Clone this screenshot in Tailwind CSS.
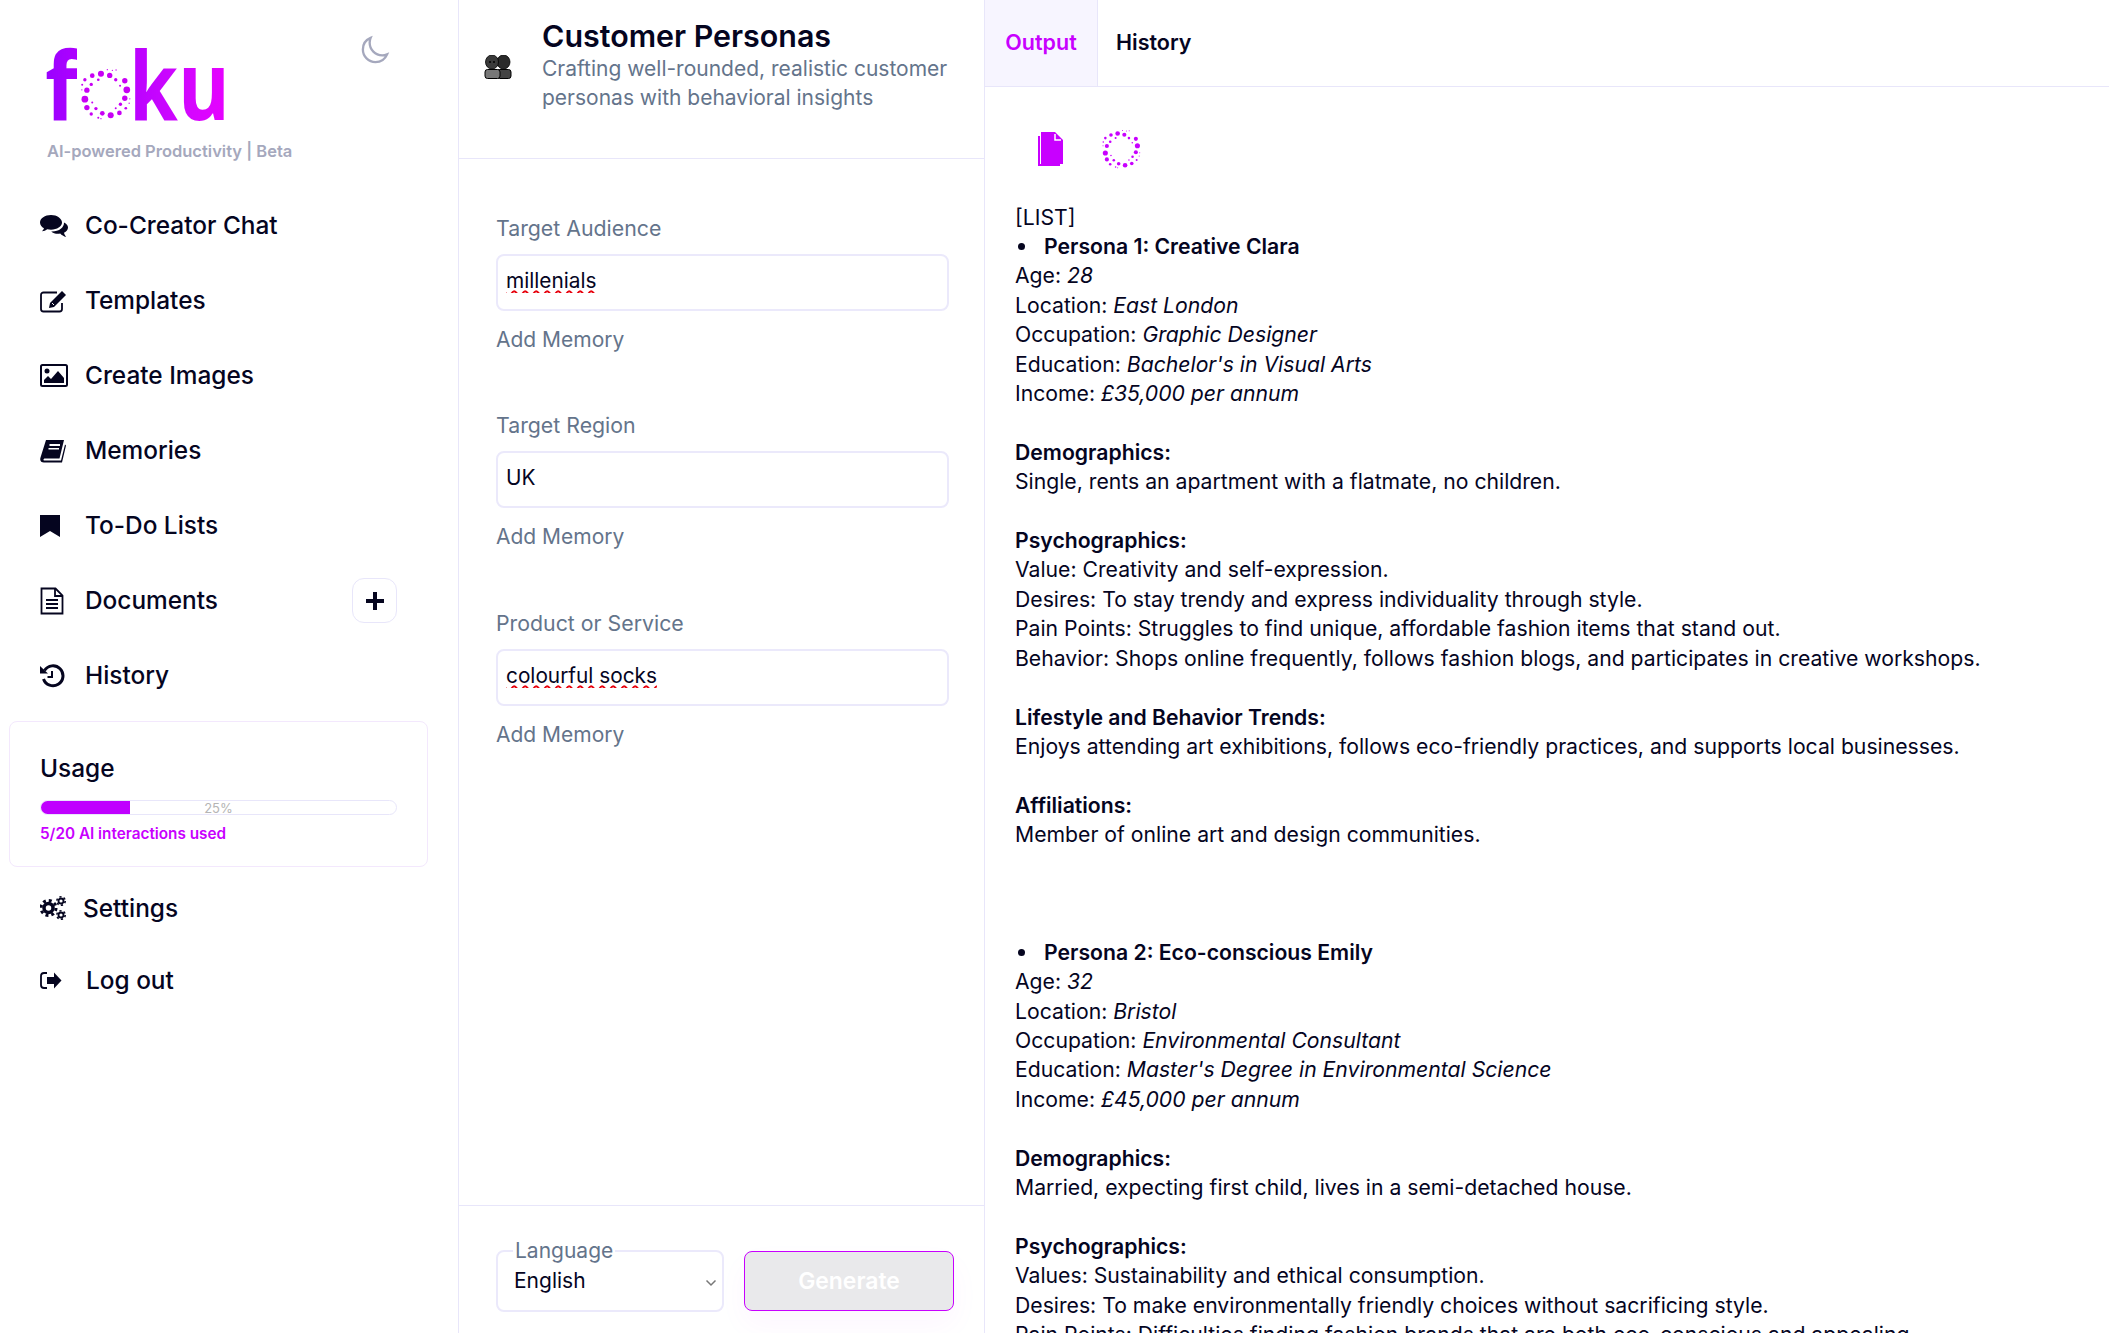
<!DOCTYPE html>
<html lang="en">
<head>
  <meta charset="UTF-8" />
  <title>Foku - Customer Personas</title>
  <script src="https://cdn.jsdelivr.net/npm/@tailwindcss/browser@4"></script>
</head>
<body class="bg-white text-[#05051f] font-['Inter',sans-serif] overflow-hidden">
  <!-- shared dot ring, used by the logo and the output toolbar -->
  <svg class="hidden">
    <symbol id="ring" viewBox="240 205 152 155">
      <circle cx="378" cy="270" r="10"/><circle cx="253" cy="298" r="10"/><circle cx="330" cy="346" r="9"/><circle cx="301" cy="222" r="9"/>
      <circle cx="327" cy="227" r="8"/><circle cx="372" cy="243" r="8"/><circle cx="372" cy="295" r="8"/><circle cx="259" cy="271" r="8"/>
      <circle cx="259" cy="323" r="8"/><circle cx="305" cy="340" r="7"/><circle cx="356" cy="339" r="7"/><circle cx="275" cy="228" r="7"/>
      <circle cx="253" cy="240" r="5"/><circle cx="345" cy="240" r="5"/><circle cx="272" cy="342" r="5"/><circle cx="286" cy="326" r="5"/>
      <circle cx="359" cy="313" r="5"/><circle cx="375" cy="325" r="4"/><circle cx="272" cy="254" r="5"/><circle cx="293" cy="240" r="4"/>
      <circle cx="345" cy="325" r="3"/><circle cx="293" cy="353" r="3"/><circle cx="245" cy="255" r="3"/><circle cx="244" cy="270" r="2"/>
      <circle cx="335" cy="212" r="2"/><circle cx="346" cy="211" r="2"/><circle cx="358" cy="258" r="3"/><circle cx="387" cy="297" r="2"/>
      <circle cx="385" cy="310" r="2"/><circle cx="275" cy="308" r="3"/><circle cx="320" cy="210" r="2"/><circle cx="301" cy="356" r="2"/>
    </symbol>
  </svg>

  <div class="flex h-screen">
    <!-- Sidebar -->
    <aside class="w-[459px] shrink-0 border-r border-[#e8e6fa]">
      <div class="relative h-[188px]">
        <div class="absolute left-[45px] top-[18px] flex items-start">
          <span class="w-[36px] origin-left scale-x-[0.9] font-['Open_Sans',sans-serif] text-[95px] leading-[130px] font-bold bg-gradient-to-r from-[#9900ff] to-[#ae00ff] bg-clip-text text-transparent">f</span>
          <svg class="w-[52px] h-[52px] mt-[50px] ml-[-1px] fill-[#c800f5]"><use href="#ring"/></svg>
          <span class="ml-[-3px] origin-left scale-x-[0.83] font-['Open_Sans',sans-serif] text-[95px] leading-[130px] font-bold bg-gradient-to-r from-[#b800ff] to-[#e800ff] bg-clip-text text-transparent">ku</span>
        </div>
        <svg class="absolute left-[359px] top-[35px] w-[31px] h-[31px] text-[#a5a8bd]" fill="none" viewBox="0 0 24 24" stroke="currentColor" stroke-width="1.800"><path d="M21.752 15.002A9.72 9.72 0 0 1 18 15.75c-5.385 0-9.75-4.365-9.75-9.75 0-1.33.266-2.597.748-3.752A9.753 9.753 0 0 0 3 11.25C3 16.635 7.365 21 12.75 21a9.753 9.753 0 0 0 9.002-5.998Z"/></svg>
        <p class="absolute left-[47px] top-[140px] text-[16.5px] leading-[22px] font-semibold text-[#a5a8bd] whitespace-nowrap">AI-powered Productivity | Beta</p>
      </div>

      <nav class="text-[24.4px] font-medium">
        <a class="flex items-center h-[75px] pl-10">
          <svg class="w-[28px] h-[24px] mr-[17px]" viewBox="0 0 28 24" fill="currentColor"><path d="M11 1C5 1 0 4.400 0 8.500c0 2.400 1.600 4.500 4 5.800-.3 1-1 2-2 3 2 0 3.800-.8 5.200-2 1.200.3 2.500.4 3.800.4 6 0 11-3.300 11-7.200S17 1 11 1z"/><path d="M24 8.500c.3 4.800-5 9.300-12.800 9 1.600 1.400 4 2.300 6.800 2.300.7 0 1.500 0 2.200-.2 1.500 1.600 3.600 2.900 6 3.400-1-1-1.800-2.500-2.200-4.200 2.500-1.200 4-3.100 4-5.300 0-2-1.500-3.800-4-5z"/></svg>
          Co-Creator Chat
        </a>
        <a class="flex items-center h-[75px] pl-10">
          <svg class="w-[28px] h-[24px] mr-[17px]" viewBox="0 0 28 24" fill="none" stroke="currentColor"><path d="M22 14v6a2.500 2.500 0 0 1-2.500 2.500H3.500A2.500 2.500 0 0 1 1 20V6a2.500 2.500 0 0 1 2.500-2.500H17" stroke-width="1.800"/><path d="M10 14l-1 5 5-1L26 6l-4-4z" fill="currentColor" stroke="none"/><path d="M12 14l2 2" stroke="#fff" stroke-width="1"/></svg>
          Templates
        </a>
        <a class="flex items-center h-[75px] pl-10">
          <svg class="w-[28px] h-[24px] mr-[17px]" viewBox="0 0 28 24"><rect x="1" y="1" width="26" height="21" rx="1.500" fill="none" stroke="currentColor" stroke-width="2"/><circle cx="7" cy="7" r="2.500" fill="currentColor"/><path d="M4 19v-3l4-4 3 3 7-8 6 7v5z" fill="currentColor"/></svg>
          Create Images
        </a>
        <a class="flex items-center h-[75px] pl-10">
          <svg class="w-[28px] h-[24px] mr-[17px]" viewBox="0 0 28 24" fill="currentColor"><path d="M6 1h18l-4.500 18.500H5c-1.500 0-2 1.500-1 2h17l4-16 1 1-4 17H4c-3 0-4.500-2-3.500-5z"/><path d="M9.500 5h10.500v2H9.500zM8.500 9h10.500v1.500H8.500z" fill="#fff"/></svg>
          Memories
        </a>
        <a class="flex items-center h-[75px] pl-10">
          <svg class="w-[28px] h-[24px] mr-[17px]" viewBox="0 0 28 24" fill="currentColor"><path d="M0 1h20v22l-10-6-10 6z"/></svg>
          To-Do Lists
        </a>
        <a class="flex items-center h-[75px] pl-10 pr-[61px]">
          <svg class="w-[28px] h-[28px] mr-[17px]" viewBox="0 0 28 28" fill="none" stroke="currentColor" stroke-width="1.800"><path d="M1.500 1.500h14l7 7v18h-21z"/><path d="M15 1.500v7.500h7.500M6 13h12M6 17h12M6 21h12"/></svg>
          Documents
          <span class="ml-auto flex h-[45px] w-[45px] items-center justify-center rounded-xl border border-[#e8e6fa]">
            <svg class="w-[18px] h-[18px]" viewBox="0 0 18 18" fill="currentColor"><path d="M7 0h4v7h7v4h-7v7H7v-7H0V7h7z"/></svg>
          </span>
        </a>
        <a class="flex items-center h-[75px] pl-10">
          <svg class="w-[28px] h-[24px] mr-[17px]" viewBox="0 0 28 24" fill="none" stroke="currentColor" stroke-width="3"><path d="M4.500 6.500a10 10 0 1 1-1 8.500"/><path d="M12 7v6H7.500" stroke-width="2"/><path d="M0 2l8 7.500H0z" fill="currentColor" stroke="none"/></svg>
          History
        </a>
      </nav>

      <section class="mx-[9px] mt-[8px] h-[146px] w-[419px] rounded-lg border border-[#f3e8fd] px-[30px] pt-[29px]">
        <h2 class="text-[24.4px] leading-[34px] font-medium">Usage</h2>
        <div class="relative mt-[15px] h-[15px] w-[357px] overflow-hidden rounded-full border border-[#e8e6fa]">
          <div class="h-full w-[25%] bg-[#c000ff]"></div>
          <span class="absolute inset-x-0 top-0 text-center text-[13px] leading-[14px] text-[#b5b5b5]">25%</span>
        </div>
        <p class="mt-[9px] text-[15.3px] leading-[20px] font-semibold text-[#c800ff]">5/20 AI interactions used</p>
      </section>

      <div class="text-[24.4px] font-medium">
        <a class="flex items-center h-[72px] mt-[5px] pl-10">
          <svg class="w-[28px] h-[24px] mr-[15px]" viewBox="0 0 28 24" fill="none" stroke="currentColor"><circle cx="8.500" cy="12" r="4.500" stroke-width="3.500"/><circle cx="8.500" cy="12" r="7.500" stroke-width="3" stroke-dasharray="2.950 2.950"/><circle cx="21" cy="5" r="2.500" stroke-width="1.800"/><circle cx="21" cy="5" r="4.200" stroke-width="1.600" stroke-dasharray="2.200 2.200"/><circle cx="21" cy="19" r="2.500" stroke-width="1.800"/><circle cx="21" cy="19" r="4.200" stroke-width="1.600" stroke-dasharray="2.200 2.200"/></svg>
          Settings
        </a>
        <a class="flex items-center h-[72px] pl-10">
          <svg class="w-[28px] h-[24px] mr-[18px]" viewBox="0 0 28 24" fill="currentColor"><path d="M7 5H4a3 3 0 0 0-3 3v9a3 3 0 0 0 3 3h3" fill="none" stroke="currentColor" stroke-width="1.800"/><path d="M7 9h7V4.500l7.500 8-7.500 8V16H7z"/></svg>
          Log out
        </a>
      </div>
    </aside>

    <!-- Form column -->
    <main class="flex w-[526px] shrink-0 flex-col border-r border-[#e8e6fa]">
      <header class="flex h-[159px] shrink-0 items-start border-b border-[#e8e6fa] pt-[19px]">
        <svg class="ml-[25px] mr-[30px] mt-[36px] w-[28px] h-[24px] shrink-0" viewBox="0 0 28 24"><ellipse cx="19.500" cy="7" rx="6.500" ry="7" fill="#2a2a2a" stroke="#000" stroke-width=".8"/><ellipse cx="8" cy="7" rx="6.500" ry="7" fill="#3a3a3a" stroke="#000" stroke-width=".8"/><circle cx="6" cy="7" r="1" fill="#000"/><circle cx="10" cy="7" r="1" fill="#000"/><rect x="13" y="14.500" width="14" height="9" rx="2.500" fill="#444" stroke="#000"/><rect x="1" y="14.500" width="15" height="9" rx="2.500" fill="#777" stroke="#000"/></svg>
        <div>
          <h1 class="text-[30.4px] leading-[35px] font-semibold">Customer Personas</h1>
          <p class="w-[430px] text-[21px] leading-[29px] text-[#64748b]">Crafting well-rounded, realistic customer personas with behavioral insights</p>
        </div>
      </header>

      <form class="flex-1 px-[37px] pt-[51px] text-[21px] text-[#64748b]">
        <div class="h-[197px]">
          <label class="block text-[21.3px] leading-[36px]">Target Audience</label>
          <input value="millenials" spellcheck="false" class="mt-[8px] block h-[57px] w-[453px] rounded-lg border-2 border-[#ebe9fb] px-[8px] pb-[5px] text-[20.8px] leading-[44px] text-[#05051f] underline decoration-wavy decoration-red-600 decoration-[1.5px] underline-offset-2 outline-none" />
          <p class="mt-[11px] leading-[36px]">Add Memory</p>
        </div>
        <div class="h-[198px]">
          <label class="block text-[21.3px] leading-[36px]">Target Region</label>
          <input value="UK" class="mt-[8px] block h-[57px] w-[453px] rounded-lg border-2 border-[#ebe9fb] px-[8px] pb-[5px] text-[20.8px] leading-[44px] text-[#05051f] outline-none" />
          <p class="mt-[11px] leading-[36px]">Add Memory</p>
        </div>
        <div>
          <label class="block text-[21.3px] leading-[36px]">Product or Service</label>
          <input value="colourful socks" spellcheck="false" class="mt-[8px] block h-[57px] w-[453px] rounded-lg border-2 border-[#ebe9fb] px-[8px] pb-[5px] text-[20.8px] leading-[44px] text-[#05051f] underline decoration-wavy decoration-red-600 decoration-[1.5px] underline-offset-2 outline-none" />
          <p class="mt-[11px] leading-[36px]">Add Memory</p>
        </div>
      </form>

      <footer class="flex h-[128px] shrink-0 items-start border-t border-[#e8e6fa] pl-[37px] pt-[32px]">
        <fieldset class="relative h-[74px] w-[228px] rounded-lg border-2 border-[#ebe9fb] px-[15px]">
          <legend class="px-[2px] text-[21px] leading-[26px] text-[#64748b]">Language</legend>
          <span class="ml-[1px] block text-[21px] leading-[34px]">English</span>
          <svg class="absolute right-[5px] top-[15px] w-[12px] h-[8px] text-[#777]" viewBox="0 0 12 8" fill="none" stroke="currentColor" stroke-width="1.500"><path d="M1.500 1.500 6 6l4.500-4.500"/></svg>
        </fieldset>
        <button type="button" class="ml-[20px] mt-[13px] h-[60px] w-[210px] rounded-lg border-[1.5px] border-[#c800ff] bg-[#e9e9eb] text-[22.9px] font-semibold text-white shadow-[0_14px_30px_rgba(200,0,255,0.04)]">Generate</button>
      </footer>
    </main>

    <!-- Output column -->
    <section class="min-w-0 flex-1 overflow-hidden">
      <div class="flex h-[87px] items-center border-b border-[#e8e6fa] text-[21.5px] font-semibold">
        <span class="flex h-full w-[113px] items-center justify-center border-r border-[#e8e6fa] bg-[#f7f5ff] pb-[2px] text-[#c800ff]">Output</span>
        <span class="ml-[18px] pb-[2px]">History</span>
      </div>
      <div class="mt-[42px] ml-[53px] flex items-center gap-[39px]">
        <svg class="w-[25px] h-[34px] fill-[#c800ff]" viewBox="0 0 25 34"><path d="M3 0h14l8 8v24H3z"/><path d="M0 4h2v28h20v2H0z"/><path d="M17 2v6h6" fill="none" stroke="#fff" stroke-width="1.500"/></svg>
        <svg class="w-[39px] h-[40px] fill-[#c800ff]"><use href="#ring"/></svg>
      </div>
      <article class="ml-[30px] mt-[33.6px] w-[1060px] text-[21.2px] leading-[29.4px]">
        <p>[LIST]</p>
        <div class="flex items-center"><span class="ml-[3px] mr-[19px] h-[7px] w-[7px] rounded-full bg-[#05051f]"></span><b class="font-semibold">Persona 1: Creative Clara</b></div>
        <p>Age: <i>28</i><br>Location: <i>East London</i><br>Occupation: <i>Graphic Designer</i><br>Education: <i>Bachelor's in Visual Arts</i><br>Income: <i>£35,000 per annum</i></p>
        <br>
        <p><b class="font-semibold">Demographics:</b><br>Single, rents an apartment with a flatmate, no children.</p>
        <br>
        <p><b class="font-semibold">Psychographics:</b><br>Value: Creativity and self-expression.<br>Desires: To stay trendy and express individuality through style.<br>Pain Points: Struggles to find unique, affordable fashion items that stand out.<br>Behavior: Shops online frequently, follows fashion blogs, and participates in creative workshops.</p>
        <br>
        <p><b class="font-semibold">Lifestyle and Behavior Trends:</b><br>Enjoys attending art exhibitions, follows eco-friendly practices, and supports local businesses.</p>
        <br>
        <p><b class="font-semibold">Affiliations:</b><br>Member of online art and design communities.</p>
        <br><br><br>
        <div class="flex items-center"><span class="ml-[3px] mr-[19px] h-[7px] w-[7px] rounded-full bg-[#05051f]"></span><b class="font-semibold">Persona 2: Eco-conscious Emily</b></div>
        <p>Age: <i>32</i><br>Location: <i>Bristol</i><br>Occupation: <i>Environmental Consultant</i><br>Education: <i>Master's Degree in Environmental Science</i><br>Income: <i>£45,000 per annum</i></p>
        <br>
        <p><b class="font-semibold">Demographics:</b><br>Married, expecting first child, lives in a semi-detached house.</p>
        <br>
        <p><b class="font-semibold">Psychographics:</b><br>Values: Sustainability and ethical consumption.<br>Desires: To make environmentally friendly choices without sacrificing style.<br>Pain Points: Difficulties finding fashion brands that are both eco-conscious and appealing.</p>
      </article>
    </section>
  </div>
</body>
</html>
